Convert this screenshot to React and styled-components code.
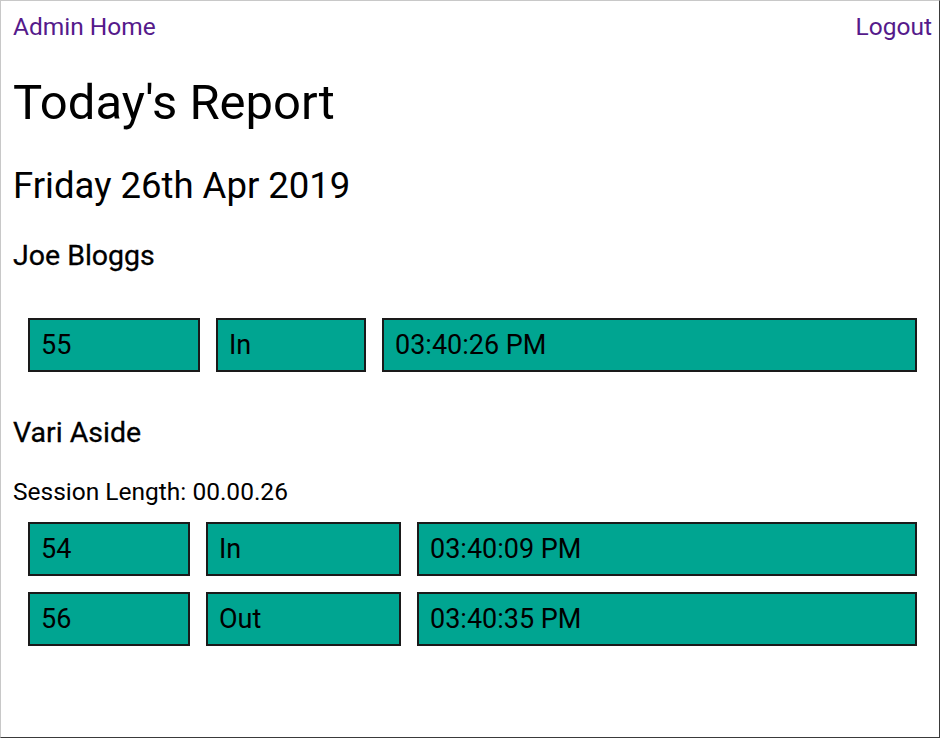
import React from 'react';
import styled, { createGlobalStyle } from 'styled-components';

const GlobalStyle = createGlobalStyle`
  html, body {
    margin: 0;
    padding: 0;
    background: #ffffff;
  }
  body {
    font-family: Roboto, "Liberation Sans", sans-serif;
    color: #000000;
  }
`;

const Frame = styled.div`
  box-sizing: border-box;
  width: 940px;
  height: 738px;
  border-top: 1px solid #c8c8c8;
  border-left: 1px solid #c8c8c8;
  border-right: 1px solid #3a3a3a;
  border-bottom: 1px solid #3a3a3a;
  padding: 0 7px 0 12px;
  overflow: hidden;
`;

const NavBar = styled.nav`
  box-sizing: border-box;
  display: flex;
  justify-content: space-between;
  align-items: center;
  height: 54px;
  padding-bottom: 4px;
`;

const NavLink = styled.a`
  color: #551a8b;
  font-size: 24.5px;
  text-decoration: none;
`;

const Title = styled.h1`
  font-size: 49px;
  font-weight: 400;
  margin: 19px 0 0;
  line-height: 58px;
`;

const DateHeading = styled.h2`
  font-size: 36.5px;
  font-weight: 400;
  margin: 32px 0 0;
  line-height: 44px;
`;

const Person = styled.section`
  margin-top: ${(p) => p.$top}px;
`;

const PersonName = styled.h3`
  font-size: 28.5px;
  font-weight: 400;
  margin: 0;
  line-height: 33px;
  -webkit-text-stroke: 0.3px #000;
`;

const SessionLength = styled.p`
  font-size: 24.5px;
  margin: 28px 0 0;
  line-height: 29px;
`;

const Entries = styled.div`
  display: flex;
  flex-direction: column;
  gap: 16px;
  margin: ${(p) => p.$top}px 15px 0 15px;
`;

const EntryRow = styled.div`
  display: grid;
  grid-template-columns: ${(p) => p.$cols};
  column-gap: 16px;
`;

const Cell = styled.div`
  box-sizing: border-box;
  height: 54px;
  background: #00a591;
  border: 2px solid #1a1a1a;
  display: flex;
  align-items: center;
  padding-left: 11px;
  font-size: 27px;
`;

const people = [
  {
    name: 'Joe Bloggs',
    cols: '172px 150px 1fr',
    top: 31,
    gap: 46,
    rows: [['55', 'In', '03:40:26 PM']],
  },
  {
    name: 'Vari Aside',
    session: '00.00.26',
    cols: '162px 195px 1fr',
    top: 44,
    gap: 16,
    rows: [
      ['54', 'In', '03:40:09 PM'],
      ['56', 'Out', '03:40:35 PM'],
    ],
  },
];

const App = () => (
  <>
    <GlobalStyle />
    <Frame>
      <NavBar>
        <NavLink href="#">Admin Home</NavLink>
        <NavLink href="#">Logout</NavLink>
      </NavBar>
      <Title>Today's Report</Title>
      <DateHeading>Friday 26th Apr 2019</DateHeading>
      {people.map((person) => (
        <Person key={person.name} $top={person.top}>
          <PersonName>{person.name}</PersonName>
          {person.session && <SessionLength>Session Length: {person.session}</SessionLength>}
          <Entries $top={person.gap}>
            {person.rows.map((row) => (
              <EntryRow key={row[0]} $cols={person.cols}>
                {row.map((value) => (
                  <Cell key={value}>{value}</Cell>
                ))}
              </EntryRow>
            ))}
          </Entries>
        </Person>
      ))}
    </Frame>
  </>
);

export default App;
